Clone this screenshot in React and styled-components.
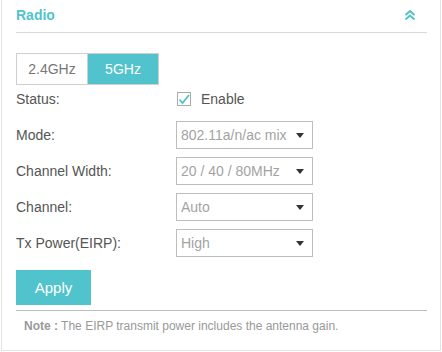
import React, { useState } from 'react'
import styled, { createGlobalStyle } from 'styled-components'

const teal = '#51c3cc'

const GlobalStyle = createGlobalStyle`
  html, body {
    margin: 0;
    padding: 0;
    background: #ffffff;
  }
  body {
    font-family: 'Liberation Sans', Arial, sans-serif;
    color: #555;
  }
`

const Card = styled.section`
  box-sizing: border-box;
  width: 440px;
  height: 351px;
  margin: 0 1px;
  border: 1px solid #e4e4e4;
  border-top: none;
  padding: 0 13px 0 14px;
  background: #fff;
  display: flex;
  flex-direction: column;
`

const Header = styled.header`
  display: flex;
  align-items: center;
  justify-content: space-between;
  height: 30px;
  padding-bottom: 2px;
  border-bottom: 1px solid #d9d9d9;
`

const Title = styled.h2`
  margin: 0;
  font-size: 14px;
  font-weight: bold;
  color: ${teal};
`

const Collapse = styled.button`
  border: none;
  background: none;
  padding: 0;
  margin-right: 11px;
  display: flex;
  cursor: pointer;
`

const Body = styled.div`
  padding-top: 20px;
  display: flex;
  flex-direction: column;
`

const Tabs = styled.div`
  display: flex;
`

const Tab = styled.button`
  box-sizing: border-box;
  width: ${p => (p.$first ? '72px' : '71px')};
  height: 32px;
  border: 1px solid #cfcfcf;
  border-left: ${p => (p.$first ? '1px solid #cfcfcf' : 'none')};
  background: ${p => (p.$active ? teal : '#fff')};
  color: ${p => (p.$active ? '#fff' : '#777')};
  font-family: inherit;
  font-size: 14px;
  padding: 0;
  cursor: pointer;
`

const Form = styled.div`
  display: flex;
  flex-direction: column;
  gap: 8px;
`

const Row = styled.div`
  display: flex;
  align-items: center;
  height: 28px;
`

const Label = styled.span`
  width: 160px;
  font-size: 14px;
  color: #555;
`

const CheckLabel = styled.label`
  display: flex;
  align-items: center;
  gap: 10px;
  font-size: 14px;
  color: #555;
  margin-left: 1px;
`

const Box = styled.span`
  box-sizing: border-box;
  width: 14px;
  height: 14px;
  border: 1px solid #aaa;
  display: flex;
  align-items: center;
  justify-content: center;
`

const Select = styled.div`
  box-sizing: border-box;
  width: 137px;
  height: 28px;
  border: 1px solid #bdbdbd;
  display: flex;
  align-items: center;
  padding: 0 8px 0 4px;
  font-size: 14px;
  color: #a3a3a3;
`

const SelectText = styled.span`
  flex: 1;
  overflow: hidden;
  white-space: nowrap;
`

const Arrow = styled.span`
  width: 0;
  height: 0;
  margin-left: 9px;
  border-left: 4px solid transparent;
  border-right: 4px solid transparent;
  border-top: 5px solid #333;
`

const ApplyButton = styled.button`
  width: 75px;
  height: 35px;
  margin-top: 13px;
  border: none;
  background: ${teal};
  color: #fff;
  font-family: inherit;
  font-size: 15px;
  cursor: pointer;
`

const Note = styled.p`
  margin: 5px 0 0;
  border-top: 1px solid #bdbdbd;
  padding: 8px 0 0 8px;
  font-size: 12px;
  color: #999;
`

const ChevronsUp = () => (
  <svg width="12" height="10" viewBox="0 0 12 10" fill="none" stroke={teal} strokeWidth="2">
    <polyline points="1.5,5 6,1 10.5,5" />
    <polyline points="1.5,9.5 6,5.5 10.5,9.5" />
  </svg>
)

const Check = () => (
  <svg width="12" height="11" viewBox="0 0 12 11" fill="none" stroke={teal} strokeWidth="1.8">
    <polyline points="1.5,5.5 4.5,9 11,1" />
  </svg>
)

const fields = [
  { label: 'Mode:', value: '802.11a/n/ac mixed' },
  { label: 'Channel Width:', value: '20 / 40 / 80MHz' },
  { label: 'Channel:', value: 'Auto' },
  { label: 'Tx Power(EIRP):', value: 'High' },
]

export default function App() {
  const [band, setBand] = useState('5')

  return (
    <>
      <GlobalStyle />
      <Card>
        <Header>
          <Title>Radio</Title>
          <Collapse aria-label="Collapse">
            <ChevronsUp />
          </Collapse>
        </Header>
        <Body>
          <Form>
            <div>
              <Tabs>
                <Tab $first $active={band === '2.4'} onClick={() => setBand('2.4')}>
                  2.4GHz
                </Tab>
                <Tab $active={band === '5'} onClick={() => setBand('5')}>
                  5GHz
                </Tab>
              </Tabs>
              <Row>
                <Label>Status:</Label>
                <CheckLabel>
                  <Box>
                    <Check />
                  </Box>
                  Enable
                </CheckLabel>
              </Row>
            </div>
            {fields.map(f => (
              <Row key={f.label}>
                <Label>{f.label}</Label>
                <Select>
                  <SelectText>{f.value}</SelectText>
                  <Arrow />
                </Select>
              </Row>
            ))}
          </Form>
          <div>
            <ApplyButton>Apply</ApplyButton>
          </div>
          <Note>
            <b>Note :</b> The EIRP transmit power includes the antenna gain.
          </Note>
        </Body>
      </Card>
    </>
  )
}
